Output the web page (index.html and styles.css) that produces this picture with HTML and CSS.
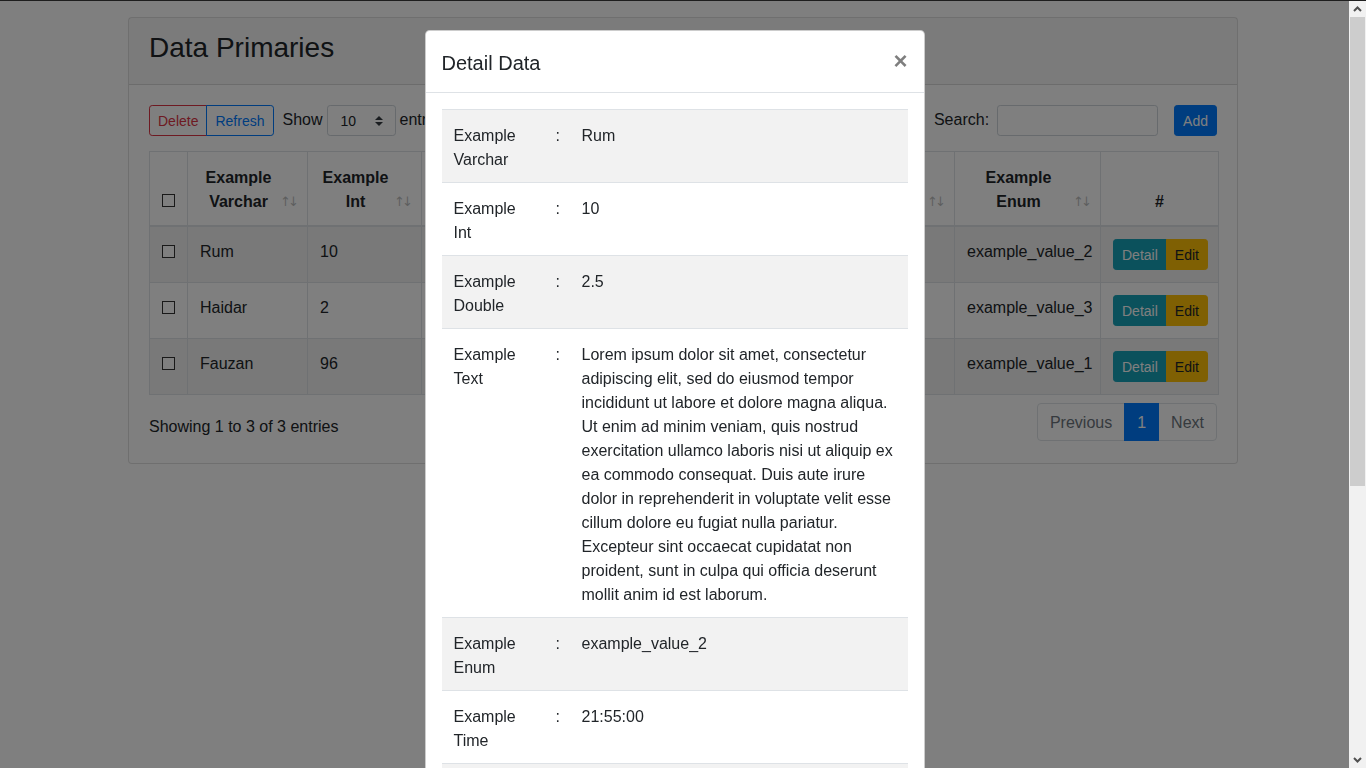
FILE: index.html
```html
<!DOCTYPE html>
<html lang="en">
<head>
<meta charset="utf-8">
<title>Data Primaries</title>
<link rel="stylesheet" href="styles.css">
</head>
<body>
<div class="container">
  <div class="card">
    <div class="card-header"><h3 class="card-title">Data Primaries</h3></div>
    <div class="card-body">
      <div class="dt-top">
        <div class="dt-left">
          <div class="btn-group">
            <button class="btn btn-outline-danger">Delete</button>
            <button class="btn btn-outline-primary">Refresh</button>
          </div>
          <div class="dt-length">
            <span>Show</span>
            <div class="fake-select"><span>10</span>
              <svg class="select-arrow" width="8" height="10" viewBox="0 0 4 5"><path fill="#343a40" d="M2 0L0 2h4zm0 5L0 3h4z"/></svg>
            </div>
            <span>entries</span>
          </div>
        </div>
        <div class="dt-right">
          <label class="dt-filter">Search:<input type="search" class="search-input"></label>
          <button class="btn btn-primary">Add</button>
        </div>
      </div>

      <table class="dt-table">
        <colgroup>
          <col class="c-check"><col class="c-varchar"><col class="c-int"><col class="c-double"><col class="c-text"><col class="c-time"><col class="c-enum"><col class="c-action">
        </colgroup>
        <thead>
          <tr>
            <th class="th-check"><span class="check"></span></th>
            <th class="sorting">Example Varchar</th>
            <th class="sorting">Example Int</th>
            <th class="sorting">Example Double</th>
            <th class="sorting">Example Text</th>
            <th class="sorting">Example Time</th>
            <th class="sorting">Example Enum</th>
            <th>#</th>
          </tr>
        </thead>
        <tbody>
          <tr>
            <td><span class="check"></span></td>
            <td>Rum</td><td>10</td><td>2.5</td><td class="clip">Lorem ipsum dolor sit amet</td><td>21:55:00</td><td>example_value_2</td>
            <td><div class="btn-group"><button class="btn btn-info">Detail</button><button class="btn btn-warning">Edit</button></div></td>
          </tr>
          <tr>
            <td><span class="check"></span></td>
            <td>Haidar</td><td>2</td><td>1.5</td><td class="clip">Lorem ipsum dolor sit amet</td><td>08:30:00</td><td>example_value_3</td>
            <td><div class="btn-group"><button class="btn btn-info">Detail</button><button class="btn btn-warning">Edit</button></div></td>
          </tr>
          <tr>
            <td><span class="check"></span></td>
            <td>Fauzan</td><td>96</td><td>3.7</td><td class="clip">Lorem ipsum dolor sit amet</td><td>12:00:00</td><td>example_value_1</td>
            <td><div class="btn-group"><button class="btn btn-info">Detail</button><button class="btn btn-warning">Edit</button></div></td>
          </tr>
        </tbody>
      </table>

      <div class="dt-bottom">
        <div class="dt-info">Showing 1 to 3 of 3 entries</div>
        <ul class="pagination">
          <li class="page-item disabled"><span class="page-link">Previous</span></li>
          <li class="page-item active"><span class="page-link">1</span></li>
          <li class="page-item disabled"><span class="page-link">Next</span></li>
        </ul>
      </div>
    </div>
  </div>
</div>

<div class="backdrop"></div>

<div class="modal">
  <div class="modal-dialog">
    <div class="modal-content">
      <div class="modal-header">
        <h5 class="modal-title">Detail Data</h5>
        <button class="close" type="button">&times;</button>
      </div>
      <div class="modal-body">
        <table class="detail-table">
          <colgroup><col class="d-label"><col class="d-colon"><col class="d-value"></colgroup>
          <tbody>
            <tr><td>Example Varchar</td><td>:</td><td>Rum</td></tr>
            <tr><td>Example Int</td><td>:</td><td>10</td></tr>
            <tr><td>Example Double</td><td>:</td><td>2.5</td></tr>
            <tr><td>Example Text</td><td>:</td><td class="long">Lorem ipsum dolor sit amet, consectetur<br>adipiscing elit, sed do eiusmod tempor<br>incididunt ut labore et dolore magna aliqua.<br>Ut enim ad minim veniam, quis nostrud<br>exercitation ullamco laboris nisi ut aliquip ex<br>ea commodo consequat. Duis aute irure<br>dolor in reprehenderit in voluptate velit esse<br>cillum dolore eu fugiat nulla pariatur.<br>Excepteur sint occaecat cupidatat non<br>proident, sunt in culpa qui officia deserunt<br>mollit anim id est laborum.</td></tr>
            <tr><td>Example Enum</td><td>:</td><td>example_value_2</td></tr>
            <tr><td>Example Time</td><td>:</td><td>21:55:00</td></tr>
            <tr><td>Example Date</td><td>:</td><td>2021-03-14</td></tr>
            <tr><td>Example Datetime</td><td>:</td><td>2021-03-14 21:55:00</td></tr>
          </tbody>
        </table>
      </div>
    </div>
  </div>
</div>

<div class="scrollbar">
  <div class="sb-btn"><svg width="9" height="6" viewBox="0 0 9 6"><path d="M1 5 L4.5 1.5 L8 5" fill="none" stroke="#505050" stroke-width="2"/></svg></div>
  <div class="sb-track"><div class="sb-thumb"></div></div>
  <div class="sb-btn"><svg width="9" height="6" viewBox="0 0 9 6"><path d="M1 1 L4.5 4.5 L8 1" fill="none" stroke="#505050" stroke-width="2"/></svg></div>
</div>
<div class="topline"></div>
</body>
</html>
```

FILE: styles.css
```css
html, body {
  margin: 0;
  height: 100%;
  overflow: hidden;
}
body {
  font-family: "Liberation Sans", Arial, sans-serif;
  font-size: 16px;
  line-height: 1.5;
  color: #212529;
  background: #fff;
}
*, *::before, *::after { box-sizing: border-box; }

.container {
  width: 1140px;
  margin: 17px auto 0;
  padding: 0 15px;
}
.card {
  background: #fff;
  border: 1px solid rgba(0,0,0,.125);
  border-radius: 4px;
}
.card-header {
  padding: 13px 20px 11px;
  background: rgba(0,0,0,.03);
  border-bottom: 1px solid rgba(0,0,0,.125);
}
.card-title {
  margin: 0 0 8px;
  font-size: 28px;
  font-weight: 500;
  line-height: 1.2;
}
.card-body { padding: 20px; }

.btn {
  font-family: inherit;
  font-size: 14px;
  line-height: 1.5;
  padding: 5px 8px 3px;
  border: 1px solid transparent;
  border-radius: 3.2px;
  background: transparent;
  color: #212529;
  cursor: pointer;
}
.btn-group { display: flex; }
.btn-group .btn + .btn { margin-left: -1px; border-top-left-radius: 0; border-bottom-left-radius: 0; }
.btn-group .btn:first-child:not(:last-child) { border-top-right-radius: 0; border-bottom-right-radius: 0; }
.btn-outline-danger { color: #dc3545; border-color: #dc3545; }
.btn-outline-primary { color: #007bff; border-color: #007bff; }
.btn-primary { color: #fff; background: #007bff; border-color: #007bff; }
.btn-info { color: #fff; background: #17a2b8; border-color: #17a2b8; }
.btn-warning { color: #212529; background: #ffc107; border-color: #ffc107; }

.dt-top {
  display: flex;
  justify-content: space-between;
  align-items: flex-start;
  height: 40px;
}
.dt-left { display: flex; align-items: flex-start; gap: 9px; }
.dt-length { display: flex; align-items: center; gap: 4px; height: 31px; }
.fake-select {
  position: relative;
  width: 69px;
  height: 31px;
  padding: 5px 24px 3px 13px;
  font-size: 14px;
  line-height: 21px;
  border: 1px solid #ced4da;
  border-radius: 3.2px;
  background: #fff;
}
.select-arrow { position: absolute; right: 12px; top: 10px; }

.dt-right { display: flex; align-items: flex-start; gap: 16px; }
.dt-filter { display: flex; align-items: center; height: 31px; }
.search-input {
  margin-left: 8px;
  width: 161px;
  height: 31px;
  padding: 4px 8px;
  font-size: 14px;
  border: 1px solid #ced4da;
  border-radius: 3.2px;
  background: #fff;
  outline: none;
}

.dt-table {
  width: 100%;
  table-layout: fixed;
  border-collapse: collapse;
  margin: 6px 0;
}
.c-check { width: 38px; }
.c-varchar { width: 120px; }
.c-int { width: 114px; }
.c-double { width: 114px; }
.c-text { width: 290px; }
.c-time { width: 129px; }
.c-enum { width: 146px; }
.c-action { width: 118px; }
.dt-table th, .dt-table td {
  border: 1px solid #dee2e6;
  padding: 13px 12px 11px;
}
.dt-table th {
  position: relative;
  vertical-align: bottom;
  text-align: center;
  font-weight: 700;
  padding-top: 14px;
  padding-bottom: 11px;
  border-bottom-width: 2px;
}
.dt-table th.sorting { padding-right: 30px; }
.dt-table th.sorting::before,
.dt-table th.sorting::after {
  position: absolute;
  bottom: 13px;
  display: block;
  opacity: .3;
  font-weight: 400;
  font-family: "DejaVu Sans", sans-serif;
  font-size: 13px;
}
.dt-table th.sorting::before { content: "\2191"; right: 16px; }
.dt-table th.sorting::after { content: "\2193"; right: 8px; }
.dt-table td { vertical-align: top; }
.dt-table td:last-child { padding-top: 12px; padding-bottom: 12px; }
.dt-table tbody tr:nth-of-type(odd) { background: rgba(0,0,0,.05); }
.dt-table td.clip { white-space: nowrap; overflow: hidden; text-overflow: ellipsis; }

.check {
  display: block;
  width: 13px;
  height: 13px;
  border: 1px solid #333;
  background: #fff;
}
.dt-table td .check { margin-top: 5px; }
.th-check .check { margin-bottom: 7px; }

.dt-bottom { display: flex; justify-content: space-between; align-items: flex-start; }
.dt-info { padding-top: 14.6px; }
.pagination { display: flex; list-style: none; margin: 2px 0; padding: 0; }
.page-link {
  display: block;
  padding: 9px 12px 7px;
  line-height: 1.25;
  border: 1px solid #dee2e6;
  margin-left: -1px;
  color: #007bff;
  background: #fff;
}
.page-item:first-child .page-link { margin-left: 0; border-radius: 4px 0 0 4px; }
.page-item:last-child .page-link { border-radius: 0 4px 4px 0; }
.page-item.disabled .page-link { color: #6c757d; }
.page-item.active .page-link { color: #fff; background: #007bff; border-color: #007bff; position: relative; }

.backdrop {
  position: fixed;
  inset: 0;
  background: #000;
  opacity: .5;
}

.modal {
  position: fixed;
  top: 0; left: 0; bottom: 0;
  right: 17px;
  overflow: hidden;
}
.modal-dialog {
  max-width: 500px;
  margin: 30px auto;
}
.modal-content {
  background: #fff;
  border: 1px solid rgba(0,0,0,.2);
  border-radius: 4.8px;
}
.modal-header {
  display: flex;
  align-items: flex-start;
  justify-content: space-between;
  padding: 17px 16px 14px;
  border-bottom: 1px solid #dee2e6;
}
.modal-title {
  margin: 0;
  font-size: 20px;
  font-weight: 500;
  line-height: 1.5;
}
.close {
  padding: 16px;
  margin: -15px -16px -16px auto;
  font-family: inherit;
  font-size: 24px;
  font-weight: 700;
  line-height: 1;
  color: #000;
  text-shadow: 0 1px 0 #fff;
  opacity: .5;
  background: transparent;
  border: 0;
}
.modal-body { padding: 16px; }
.detail-table {
  width: 100%;
  table-layout: fixed;
  border-collapse: collapse;
}
.d-label { width: 102px; }
.d-colon { width: 26px; }
.detail-table td {
  padding: 14px 12px 10px;
  vertical-align: top;
  border-top: 1px solid #dee2e6;
}
.detail-table tr:nth-of-type(odd) { background: #f2f2f2; }
.detail-table td.long { white-space: nowrap; }

.scrollbar {
  position: fixed;
  top: 0; right: 0; bottom: 0;
  width: 17px;
  background: #f1f1f1;
  display: flex;
  flex-direction: column;
}
.sb-btn {
  height: 17px;
  display: flex;
  align-items: center;
  justify-content: center;
}
.sb-track { flex: 1; padding: 0 1px; }
.sb-thumb { height: 469px; background: #cdcdcd; }

.topline {
  position: fixed;
  top: 0; left: 0; right: 0;
  height: 1px;
  background: #1e1e1e;
}
```
